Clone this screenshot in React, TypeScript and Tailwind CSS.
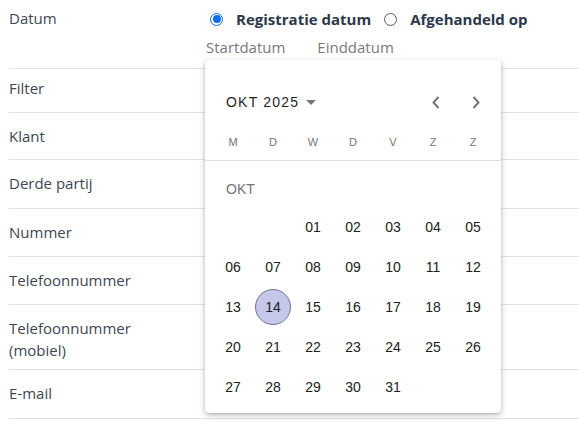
import React from 'react';

const rows = [
  { label: 'Filter', cls: 'h-[44px] pt-[8px]' },
  { label: 'Klant', cls: 'h-[47px] pt-[12px]' },
  { label: 'Derde partij', cls: 'h-[49px] pt-[12px]' },
  { label: 'Nummer', cls: 'h-[48px] pt-[12px]' },
  { label: 'Telefoonnummer', cls: 'h-[48px] pt-[12px]' },
  { label: 'Telefoonnummer (mobiel)', cls: 'h-[65px] pt-[12px]' },
  { label: 'E-mail', cls: 'h-[49px] pt-[12px]' },
];

const weekdays = ['M', 'D', 'W', 'D', 'V', 'Z', 'Z'];

const weeks: (string | null)[][] = [
  [null, null, '01', '02', '03', '04', '05'],
  ['06', '07', '08', '09', '10', '11', '12'],
  ['13', '14', '15', '16', '17', '18', '19'],
  ['20', '21', '22', '23', '24', '25', '26'],
  ['27', '28', '29', '30', '31', null, null],
];

const Radio = ({ checked, label }: { checked: boolean; label: string }) => (
  <label className="flex items-center gap-[7px]">
    <span
      className={`flex h-[13px] w-[13px] items-center justify-center rounded-full border ${
        checked ? 'border-[#0b6df6]' : 'border-[#555b63]'
      }`}
    >
      {checked && <span className="h-[8px] w-[8px] rounded-full bg-[#0b6df6]" />}
    </span>
    <span className="ml-[6px] font-bold text-[#2c384b]">{label}</span>
  </label>
);

const Calendar = () => (
  <div className="absolute left-[205px] top-[60px] w-[296px] rounded-[4px] bg-white pb-[6px] font-['Liberation_Sans',Arial,sans-serif] shadow-[0_2px_6px_rgba(0,0,0,0.25),0_1px_2px_rgba(0,0,0,0.12)]">
    {/* Header */}
    <div className="mt-[22px] flex h-[40px] items-center pl-[21px] pr-[5px]">
      <div className="flex items-center gap-[7px] text-[14px] tracking-[1.2px] text-[#1f1f1f]">
        OKT 2025
        <svg width="10" height="5" viewBox="0 0 10 5">
          <path d="M0 0 L5 5 L10 0 Z" fill="#757575" />
        </svg>
      </div>
      <div className="ml-auto flex">
        <button className="flex h-10 w-10 items-center justify-center text-[#757575]">
          <svg width="8" height="13" viewBox="0 0 8 13">
            <path d="M6.5 1 L1.5 6.5 L6.5 12" fill="none" stroke="currentColor" strokeWidth="2" />
          </svg>
        </button>
        <button className="flex h-10 w-10 items-center justify-center text-[#757575]">
          <svg width="8" height="13" viewBox="0 0 8 13">
            <path d="M1.5 1 L6.5 6.5 L1.5 12" fill="none" stroke="currentColor" strokeWidth="2" />
          </svg>
        </button>
      </div>
    </div>

    {/* Weekdays */}
    <div className="mt-[2px] border-b border-[#e0e0e0] px-[8px]">
      <div className="grid h-[36px] grid-cols-7 items-center text-center text-[11px] text-[#757575]">
        {weekdays.map((d, i) => (
          <span key={i}>{d}</span>
        ))}
      </div>
    </div>

    {/* Body */}
    <div className="px-[8px]">
      <div className="pb-[8px] pl-[13px] pt-[18px] text-[14px] leading-5 text-[#757575]">OKT</div>
      {weeks.map((w, wi) => (
        <div key={wi} className="grid h-[40px] grid-cols-7 items-center text-[14px] text-[#212121]">
          {w.map((d, di) => (
            <div key={di} className="flex items-center justify-center">
              {d &&
                (d === '14' ? (
                  <span className="flex h-[36px] w-[36px] items-center justify-center rounded-full border border-[#6f7390] bg-[#c5c8e8]">
                    {d}
                  </span>
                ) : (
                  <span>{d}</span>
                ))}
            </div>
          ))}
        </div>
      ))}
    </div>
  </div>
);

export default function App() {
  return (
    <div className="relative h-[426px] w-[579px] overflow-hidden bg-white pl-[9px] font-['Open_Sans',sans-serif] text-[15px] text-[#404753]">
      {/* Datum row */}
      <div className="flex h-[69px] border-b border-[#e2e2e2] pt-[6px]">
        <div className="w-[197px] leading-6">Datum</div>
        <div className="flex flex-col">
          <div className="flex h-[26px] items-center gap-[13px] pl-[4px]">
            <Radio checked label="Registratie datum" />
            <Radio checked={false} label="Afgehandeld op" />
          </div>
          <div className="mt-[3px] flex gap-[32px] leading-6 text-[#7a7a7a]">
            <span>Startdatum</span>
            <span>Einddatum</span>
          </div>
        </div>
      </div>

      {rows.map((r) => (
        <div key={r.label} className={`flex items-start border-b border-[#e2e2e2] ${r.cls}`}>
          <div className="w-[140px] leading-[22px]">{r.label}</div>
        </div>
      ))}

      <Calendar />
    </div>
  );
}
